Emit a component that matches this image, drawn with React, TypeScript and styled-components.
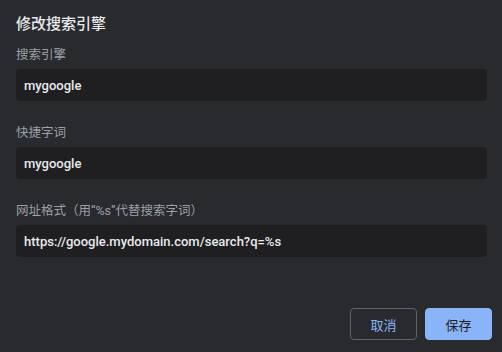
import React from 'react';
import styled, { createGlobalStyle } from 'styled-components';

const GlobalStyle = createGlobalStyle`
  html, body {
    margin: 0;
    padding: 0;
    background-color: #292a2d;
  }
  body {
    font-family: Roboto, 'Noto Sans CJK SC', sans-serif;
  }
`;

const Dialog = styled.div`
  display: flex;
  flex-direction: column;
  box-sizing: border-box;
  height: 100vh;
  padding: 14px 10px 12px 16px;
  background-color: #292a2d;
`;

const Title = styled.div`
  font-size: 15px;
  font-weight: 500;
  line-height: 20px;
  color: #e8eaed;
  margin-bottom: 13px;
`;

const Field = styled.div`
  display: flex;
  flex-direction: column;
  margin-right: 5px;
  & + & {
    margin-top: 24px;
  }
`;

const Label = styled.label`
  font-size: 12.5px;
  line-height: 16px;
  color: #9aa0a6;
  margin-bottom: 6px;
`;

const Input = styled.input`
  box-sizing: border-box;
  height: 32px;
  width: 100%;
  padding: 0 8px;
  border: none;
  border-radius: 4px;
  outline: none;
  background-color: #1f1f21;
  color: #e8eaed;
  font-family: Roboto, 'Noto Sans CJK SC', sans-serif;
  font-size: 13px;
  font-weight: 500;
`;

const Footer = styled.div`
  display: flex;
  justify-content: flex-end;
  gap: 8px;
  margin-top: auto;
`;

const Button = styled.button<{ $primary?: boolean }>`
  box-sizing: border-box;
  width: 67px;
  height: 32px;
  border-radius: 4px;
  font-family: Roboto, 'Noto Sans CJK SC', sans-serif;
  font-size: 13px;
  cursor: pointer;
  border: 1px solid ${(p) => (p.$primary ? '#8ab4f8' : '#5f6368')};
  background-color: ${(p) => (p.$primary ? '#8ab4f8' : 'transparent')};
  color: ${(p) => (p.$primary ? '#202124' : '#8ab4f8')};
`;

const FIELDS = [
  { id: 'name', label: '搜索引擎', value: 'mygoogle' },
  { id: 'keyword', label: '快捷字词', value: 'mygoogle' },
  { id: 'url', label: '网址格式（用“%s”代替搜索字词）', value: 'https://google.mydomain.com/search?q=%s' },
];

const App = () => {
  return (
    <>
      <GlobalStyle />
      <Dialog>
        <Title>修改搜索引擎</Title>
        {FIELDS.map((item) => (
          <Field key={item.id}>
            <Label htmlFor={item.id}>{item.label}</Label>
            <Input id={item.id} defaultValue={item.value} />
          </Field>
        ))}
        <Footer>
          <Button>{'取消'}</Button>
          <Button $primary>{'保存'}</Button>
        </Footer>
      </Dialog>
    </>
  );
};

export default App;
